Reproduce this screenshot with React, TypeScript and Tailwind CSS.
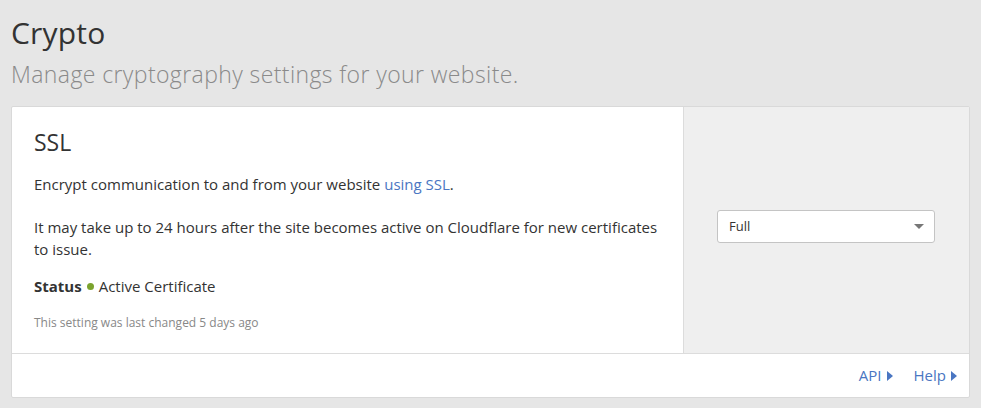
import React from 'react';

const font = { fontFamily: '"Open Sans", "Liberation Sans", sans-serif' };

const Caret: React.FC = () => (
  <svg width="6" height="10" viewBox="0 0 6 10" className="ml-[5px] inline-block">
    <path d="M0 0 L6 5 L0 10 Z" fill="currentColor" />
  </svg>
);

export default function App() {
  return (
    <div
      className="min-h-[408px] w-[981px] bg-[#e6e6e6] pl-[11px] pr-[11px] pt-[15px] text-[#333]"
      style={font}
    >
      {/* Page header */}
      <h1 className="text-[30px] leading-[36px] tracking-[0.2px] text-[#333]">Crypto</h1>
      <p className="mt-[8px] text-[23px] font-light leading-[30px] tracking-[0.4px] text-[#8a8a8a]">
        Manage cryptography settings for your website.
      </p>

      {/* SSL card */}
      <div className="mt-[17px] w-[959px] rounded-[2px] border border-[#d9d9d9] bg-white">
        <div className="flex">
          <div className="w-[671px] pl-[22px] pr-[22px] pt-[19px] pb-[22px]">
            <h2 className="text-[23px] leading-[32px] text-[#333]">SSL</h2>
            <p className="mt-[15px] text-[15px] leading-[22px]">
              Encrypt communication to and from your website{' '}
              <a className="text-[#4a76c2]">using SSL</a>.
            </p>
            <p className="mt-[21px] text-[15px] leading-[22px]">
              It may take up to 24 hours after the site becomes active on Cloudflare for new certificates to issue.
            </p>
            <div className="mt-[15px] flex items-center text-[15px] leading-[22px]">
              <span className="font-bold">Status</span>
              <span className="ml-[5px] mr-[5px] inline-block h-[7px] w-[7px] rounded-full bg-[#7ba32e]" />
              <span>Active Certificate</span>
            </div>
            <p className="mt-[18px] text-[12px] leading-[16px] text-[#888]">
              This setting was last changed 5 days ago
            </p>
          </div>
          <div className="flex flex-1 items-center border-l border-[#dcdcdc] bg-[#efefef] pl-[33px]">
            <div className="mb-[7px] flex h-[33px] w-[218px] items-center justify-between rounded-[3px] border border-[#c4c4c4] bg-white pl-[11px] pr-[10px] text-[13px] text-[#333]">
              <span>Full</span>
              <svg width="10" height="5" viewBox="0 0 10 5">
                <path d="M0 0 L10 0 L5 5 Z" fill="#777" />
              </svg>
            </div>
          </div>
        </div>
        <div className="flex h-[44px] items-center justify-end gap-[21px] border-t border-[#dcdcdc] pr-[12px] text-[15px] text-[#4a76c2]">
          <a className="flex items-center">
            API
            <Caret />
          </a>
          <a className="flex items-center">
            Help
            <Caret />
          </a>
        </div>
      </div>
    </div>
  );
}
